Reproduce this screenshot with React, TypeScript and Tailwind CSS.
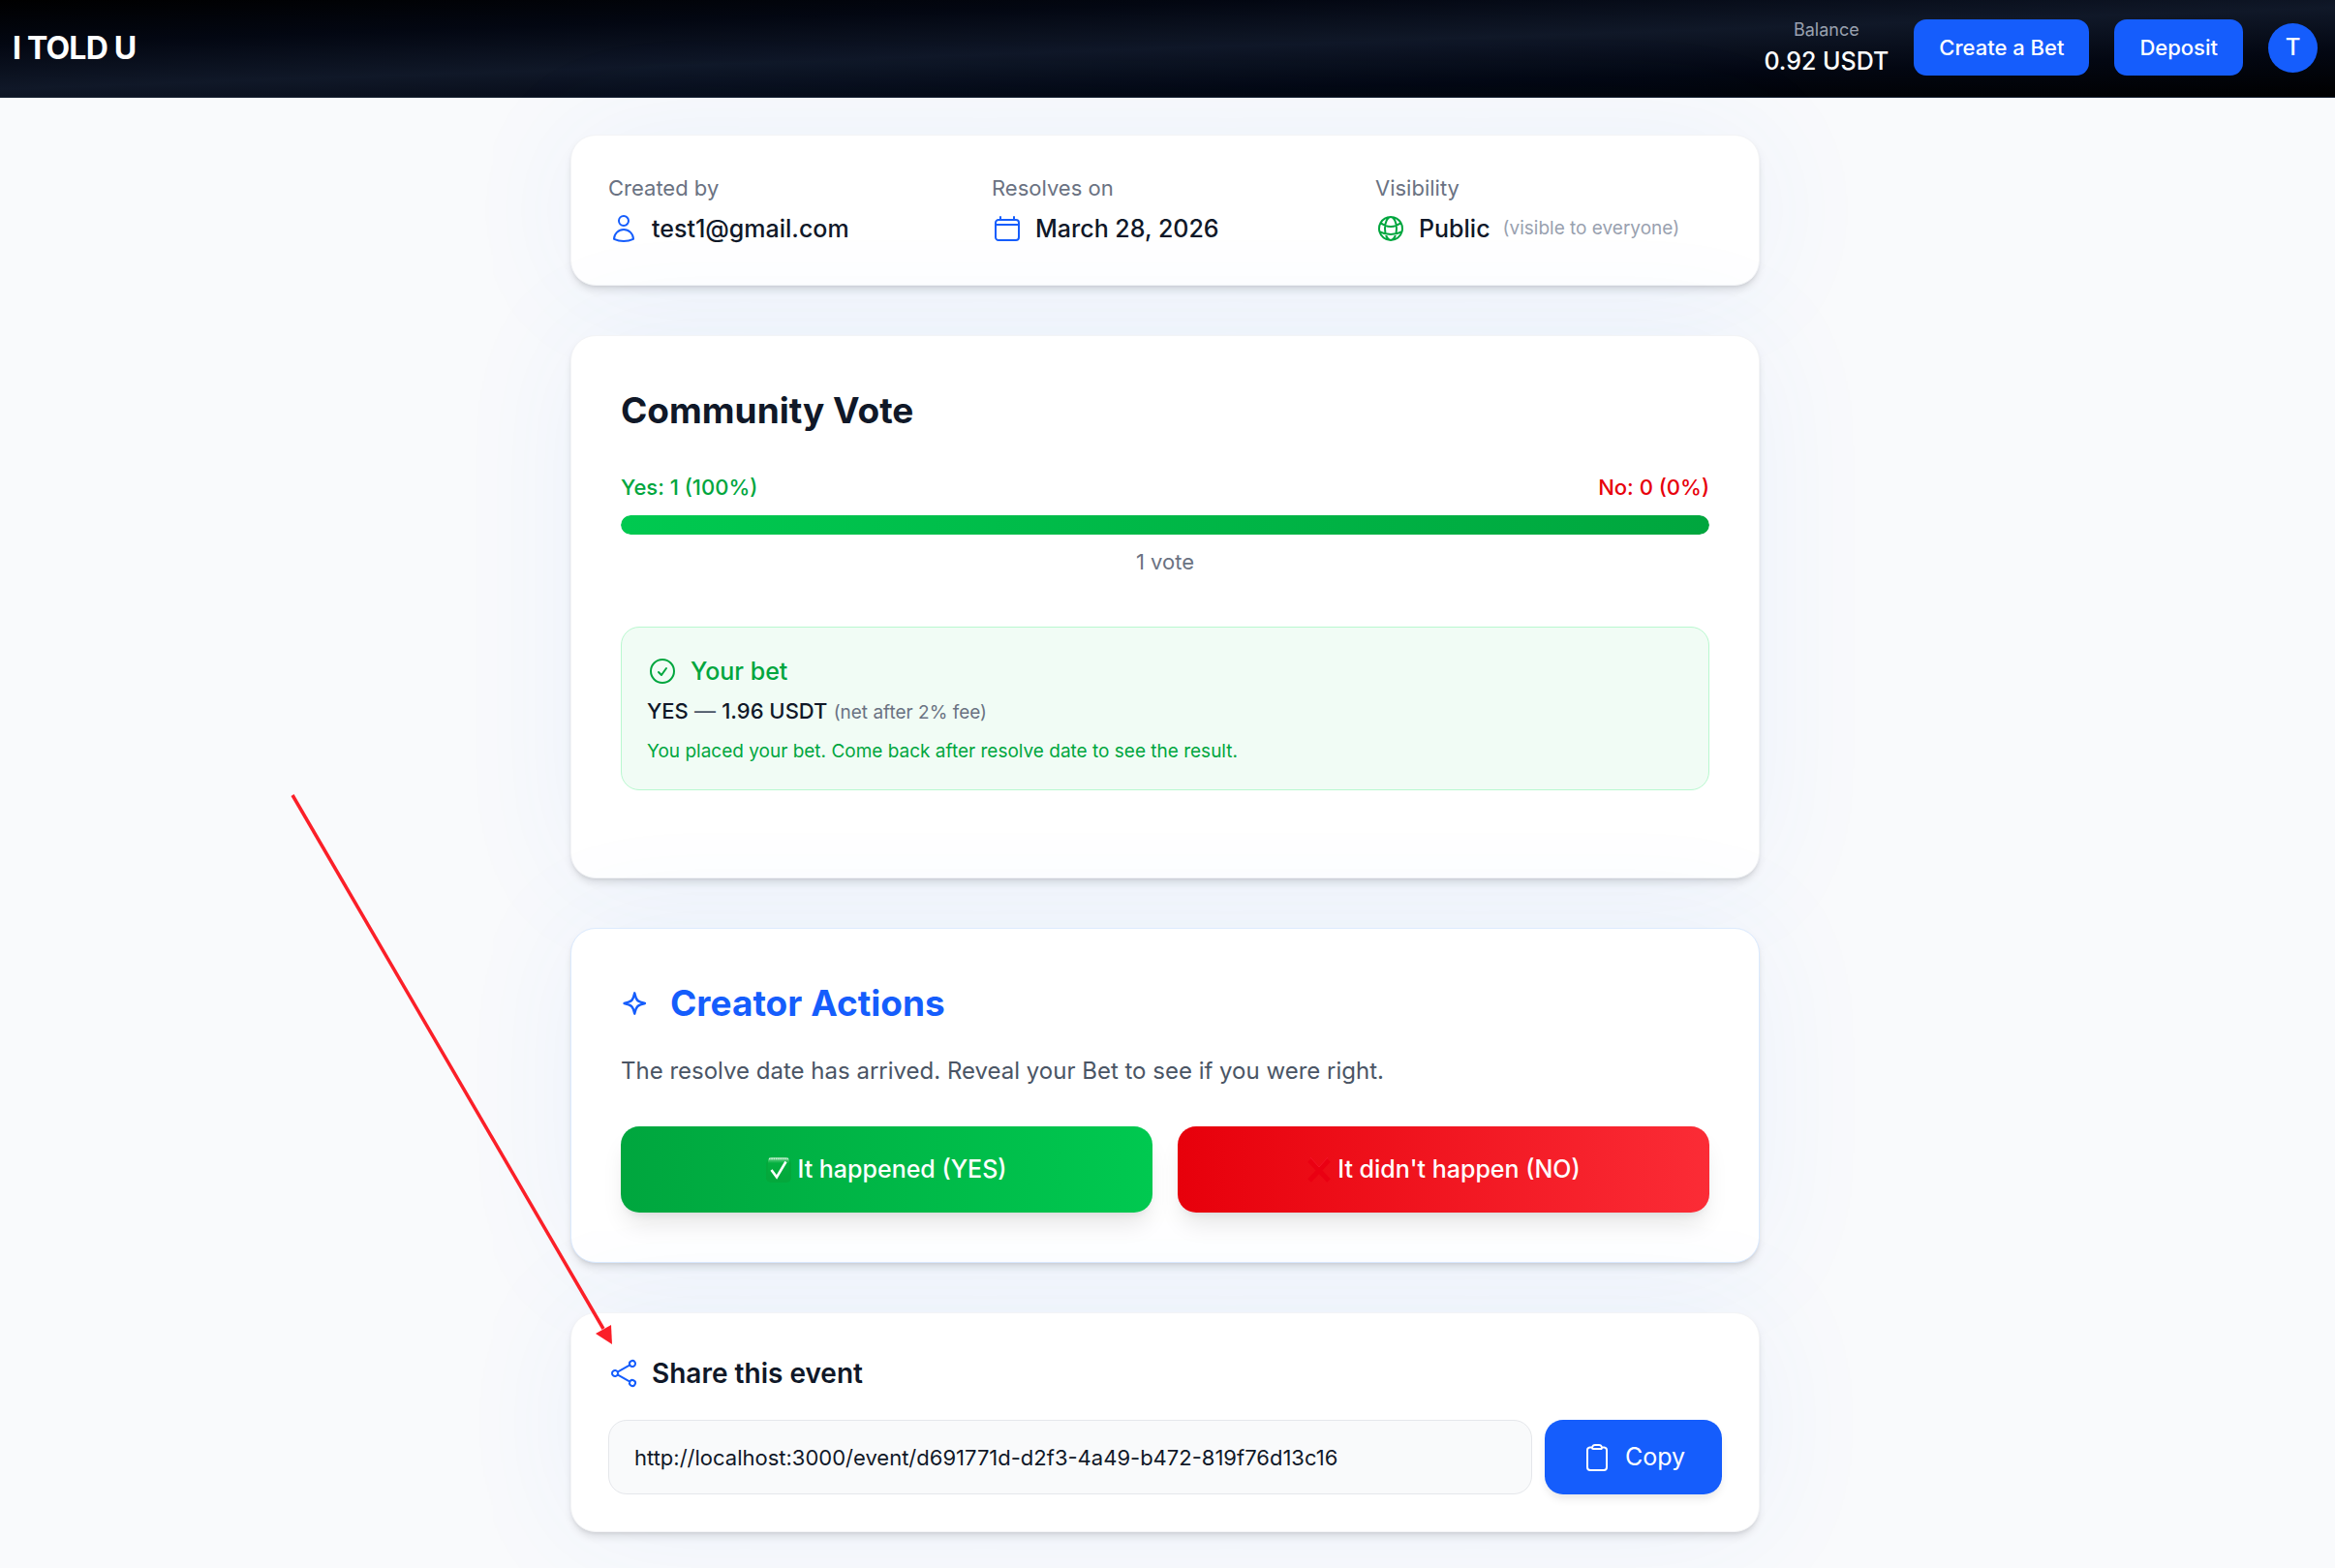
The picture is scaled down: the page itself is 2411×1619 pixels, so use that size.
import { ReactNode, useState } from 'react'
import {
  HiOutlineCheckCircle,
  HiOutlineClipboard,
  HiOutlineGlobeAlt,
  HiOutlineShare,
  HiOutlineUser,
} from 'react-icons/hi2'

const EVENT_URL =
  'http://localhost:3000/event/d691771d-d2f3-4a49-b472-819f76d13c16'

const cardShadow =
  'shadow-[0_2px_4px_-2px_rgba(0,0,0,0.12),0_6px_10px_-2px_rgba(0,0,0,0.12),0_0_128px_rgba(59,130,246,0.07)]'

const CalendarIcon = () => (
  <svg
    className="size-8 shrink-0 text-[#155dfc]"
    viewBox="0 0 24 24"
    fill="none"
    stroke="currentColor"
    strokeWidth={1.5}
    strokeLinecap="round"
    strokeLinejoin="round"
    aria-hidden="true"
  >
    <path d="M6.75 3v2.25M17.25 3v2.25M3 9h18M3 7.5a2.25 2.25 0 0 1 2.25-2.25h13.5A2.25 2.25 0 0 1 21 7.5v11.25A2.25 2.25 0 0 1 18.75 21H5.25A2.25 2.25 0 0 1 3 18.75Z" />
  </svg>
)

const SparkleIcon = () => (
  <svg
    className="size-[38px] shrink-0"
    viewBox="0 0 24 24"
    fill="none"
    stroke="currentColor"
    strokeWidth={1.5}
    strokeLinecap="round"
    strokeLinejoin="round"
    aria-hidden="true"
  >
    <path d="M9.813 15.904 9 18.75l-.813-2.846a4.5 4.5 0 0 0-3.09-3.09L2.25 12l2.846-.813a4.5 4.5 0 0 0 3.09-3.09L9 5.25l.813 2.846a4.5 4.5 0 0 0 3.09 3.09L15.75 12l-2.846.813a4.5 4.5 0 0 0-3.09 3.09Z" />
  </svg>
)

const CheckMark = () => (
  <svg className="size-[26px]" viewBox="0 0 26 26" aria-hidden="true">
    <defs>
      <linearGradient id="check-top" x1="0" y1="0" x2="0" y2="1">
        <stop offset="0" stopColor="#8fdca6" />
        <stop offset="0.16" stopColor="#3cc468" />
        <stop offset="0.3" stopColor="#04b03f" />
        <stop offset="1" stopColor="#04a83c" />
      </linearGradient>
    </defs>
    <rect x="0" y="2" width="26" height="24" rx="5" fill="#04a83c" />
    <rect x="2" y="0" width="22" height="20" rx="4" fill="url(#check-top)" />
    <path
      d="M3 1.5h20"
      stroke="#c9f0d4"
      strokeWidth="1.5"
      strokeDasharray="1.5 0.8"
    />
    <path
      d="m5.5 13 5.5 7.5 9.5-16"
      fill="none"
      stroke="#fff"
      strokeWidth="2.6"
    />
  </svg>
)

const CrossMark = () => (
  <svg className="size-[26px]" viewBox="0 0 26 26" aria-hidden="true">
    <path d="m3 3 20 21M23 3 3 24" stroke="#ea0012" strokeWidth="5" />
    <path d="m4 0 9 10 9-10" fill="none" stroke="#f3162a" strokeWidth="1" />
  </svg>
)

const Header = () => (
  <header className="border-b border-[#1e2939] bg-[linear-gradient(178deg,#000000_0%,#030712_25%,#101828_50%,#030712_75%,#000000_100%)] pr-[18px] pl-[13px]">
    <div className="flex h-[100px] items-center justify-between">
      <a href="#" className="text-[32px] font-bold tracking-tight text-white">
        I TOLD U
      </a>
      <div className="flex items-center gap-[26px] pb-0.5">
        <div className="flex flex-col items-center pt-0.5">
          <span className="text-[18px] leading-[26px] text-[#99a1af]">
            Balance
          </span>
          <span className="text-[25px] leading-[38px] font-medium text-white">
            0.92 USDT
          </span>
        </div>
        <button
          type="button"
          className="h-[58px] rounded-[13px] bg-[#155dfc] px-[26px] text-[22px] font-medium text-white"
        >
          Create a Bet
        </button>
        <button
          type="button"
          className="h-[58px] rounded-[13px] bg-[#155dfc] px-[26px] text-[22px] font-medium text-white"
        >
          Deposit
        </button>
        <button
          type="button"
          className="size-[51px] rounded-full bg-[#155dfc] text-[24px] font-medium text-white"
        >
          T
        </button>
      </div>
    </div>
  </header>
)

const Detail = ({ label, children }: { label: string; children: ReactNode }) => (
  <div>
    <p className="mb-[6px] text-[22px] leading-8 text-[#6a7282]">{label}</p>
    <div className="flex items-center gap-[13px] text-[25px] leading-10 font-medium text-[#101828]">
      {children}
    </div>
  </div>
)

const CommunityVote = ({ yes, no }: { yes: number; no: number }) => {
  const total = yes + no
  const yesPercent = Math.round((yes / total) * 100)

  return (
    <section
      className={`rounded-[26px] border border-[#f3f4f6] bg-white px-[51px] pt-[51px] pb-[90px] ${cardShadow}`}
    >
      <h2 className="mb-[38px] text-[37px] leading-[51px] font-bold text-[#101828]">
        Community Vote
      </h2>
      <div className="mb-[13px] flex justify-between text-[22px] leading-8 font-medium">
        <span className="text-[#00a63e]">
          Yes: {yes} ({yesPercent}%)
        </span>
        <span className="text-[#e7000b]">
          No: {no} ({100 - yesPercent}%)
        </span>
      </div>
      <div className="h-5 overflow-hidden rounded-full bg-gray-200">
        <div
          className="h-full rounded-full bg-[linear-gradient(to_right,#00c950,#00a63e)]"
          style={{ width: `${yesPercent}%` }}
        />
      </div>
      <p className="mt-3 text-center text-[22px] leading-8 text-[#6a7282]">
        {total} vote
      </p>
      <div className="mt-[51px] rounded-[19px] border border-[#b9f8cf] bg-[#f1fcf5] p-[26px]">
        <div className="mb-[6px] flex items-center gap-[13px] text-[25px] leading-[38px] font-medium text-[#00a63e]">
          <HiOutlineCheckCircle className="size-8" />
          Your bet
        </div>
        <p className="text-[22px] leading-8 text-[#4a5565]">
          <span className="font-medium text-[#101828]">YES</span> —{' '}
          <span className="font-medium text-[#101828]">1.96 USDT</span>{' '}
          <span className="text-[19px] leading-none text-[#6a7282]">
            (net after 2% fee)
          </span>
        </p>
        <p className="mt-[13px] text-[19px] leading-[26px] text-[#00a63e]">
          You placed your bet. Come back after resolve date to see the result.
        </p>
      </div>
    </section>
  )
}

const CreatorActions = () => (
  <section
    className={`rounded-[26px] border border-[#dbeafe] bg-white p-[51px] ${cardShadow}`}
  >
    <h2 className="mb-[26px] flex items-center gap-[13px] text-[37px] leading-[51px] font-bold text-[#155dfc]">
      <SparkleIcon />
      Creator Actions
    </h2>
    <p className="mb-[38px] text-[24px] leading-[38px] text-[#4a5565]">
      The resolve date has arrived. Reveal your Bet to see if you were right.
    </p>
    <div className="grid grid-cols-2 gap-[26px]">
      <button
        type="button"
        className="flex h-[89px] items-center justify-center gap-[6px] rounded-[19px] bg-[linear-gradient(to_right,#00a63e,#00c950)] text-[25px] font-medium text-white shadow-[0_16px_24px_-5px_rgba(0,0,0,0.1),0_6px_10px_-6px_rgba(0,0,0,0.1)]"
      >
        <CheckMark />
        It happened (YES)
      </button>
      <button
        type="button"
        className="flex h-[89px] items-center justify-center gap-[6px] rounded-[19px] bg-[linear-gradient(to_right,#e7000b,#fb2c36)] text-[25px] font-medium text-white shadow-[0_16px_24px_-5px_rgba(0,0,0,0.1),0_6px_10px_-6px_rgba(0,0,0,0.1)]"
      >
        <CrossMark />
        It didn't happen (NO)
      </button>
    </div>
  </section>
)

const ShareEvent = () => {
  const [copied, setCopied] = useState<boolean>(false)

  const handleCopy = async () => {
    try {
      await navigator.clipboard.writeText(EVENT_URL)
      setCopied(true)
    } catch (error) {
      alert(error)
    }
  }

  return (
    <section
      className={`rounded-[26px] border border-[#f3f4f6] bg-white p-[38px] ${cardShadow}`}
    >
      <h3 className="mb-6 flex items-center gap-[13px] text-[28px] leading-[48px] font-semibold text-[#101828]">
        <HiOutlineShare className="size-8 text-[#155dfc]" />
        <label htmlFor="event-url">Share this event</label>
      </h3>
      <div className="flex gap-[13px]">
        <input
          id="event-url"
          type="text"
          readOnly
          value={EVENT_URL}
          className="h-[77px] min-w-0 flex-1 rounded-[19px] border border-[#e5e7eb] bg-[#f9fafb] px-[26px] text-[22px] text-[#101828] outline-none"
        />
        <button
          type="button"
          onClick={handleCopy}
          className="flex h-[77px] items-center gap-[13px] rounded-[19px] bg-[#155dfc] px-[38px] text-[25px] text-white shadow-[0_6px_10px_-2px_rgba(0,0,0,0.1)]"
        >
          <HiOutlineClipboard className="size-8" />
          {copied ? 'Copied' : 'Copy'}
        </button>
      </div>
    </section>
  )
}

const App = () => (
  <div className="relative min-h-screen overflow-hidden bg-[#f9fafc] font-['Inter',sans-serif]">
    <Header />
    <main className="mr-[5px] pt-[38px] pb-[37px]">
      <div className="mx-auto flex max-w-[1228px] flex-col gap-[51px]">
        <section
          className={`grid grid-cols-3 gap-[38px] rounded-[26px] border border-[#f3f4f6] bg-white p-[38px] ${cardShadow}`}
        >
          <Detail label="Created by">
            <HiOutlineUser className="size-8 shrink-0 text-[#155dfc]" />
            test1@gmail.com
          </Detail>
          <Detail label="Resolves on">
            <CalendarIcon />
            March 28, 2026
          </Detail>
          <Detail label="Visibility">
            <HiOutlineGlobeAlt className="size-8 shrink-0 text-[#00a63e]" />
            Public
            <span className="text-[19px] font-normal text-[#99a1af]">
              (visible to everyone)
            </span>
          </Detail>
        </section>
        <CommunityVote yes={1} no={0} />
        <CreatorActions />
        <ShareEvent />
      </div>
    </main>
    <svg
      className="pointer-events-none absolute top-[820px] left-[300px] h-[570px] w-[334px]"
      viewBox="0 0 334 570"
      aria-hidden="true"
    >
      <path d="M2 1 323 552" stroke="#fb1f28" strokeWidth="3.5" />
      <path d="m332 568-1-20-16 9Z" fill="#fb1f28" />
    </svg>
  </div>
)

export default App
